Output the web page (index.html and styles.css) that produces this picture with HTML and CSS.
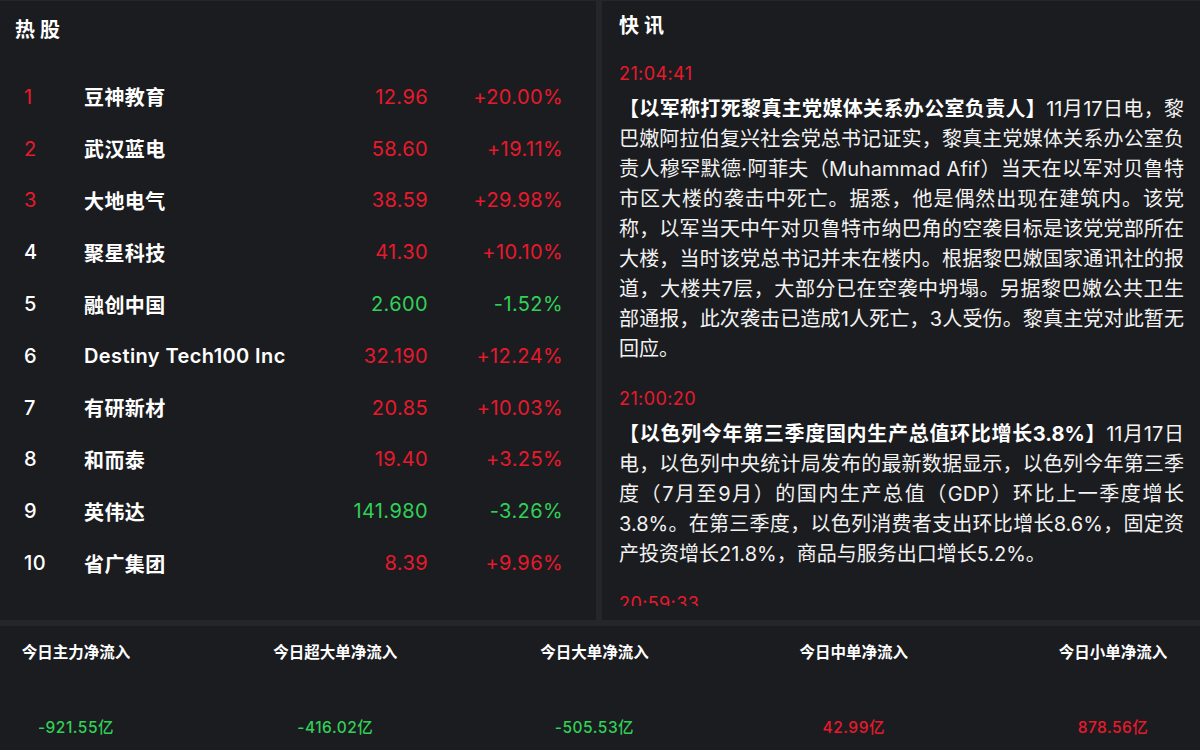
FILE: index.html
```html
<!DOCTYPE html>
<html lang="zh-CN">
<head>
<meta charset="utf-8">
<title>热股 快讯</title>
<link rel="stylesheet" href="styles.css">
</head>
<body>
<div class="page">
  <div class="top">
    <section class="panel hot">
      <h2 class="title">热股</h2>
      <div class="list">
        <div class="row"><span class="rank up">1</span><span class="name">豆神教育</span><span class="price up">12.96</span><span class="pct up">+20.00%</span></div>
        <div class="row"><span class="rank up">2</span><span class="name">武汉蓝电</span><span class="price up">58.60</span><span class="pct up">+19.11%</span></div>
        <div class="row"><span class="rank up">3</span><span class="name">大地电气</span><span class="price up">38.59</span><span class="pct up">+29.98%</span></div>
        <div class="row"><span class="rank">4</span><span class="name">聚星科技</span><span class="price up">41.30</span><span class="pct up">+10.10%</span></div>
        <div class="row"><span class="rank">5</span><span class="name">融创中国</span><span class="price down">2.600</span><span class="pct down">-1.52%</span></div>
        <div class="row"><span class="rank">6</span><span class="name">Destiny Tech100 Inc</span><span class="price up">32.190</span><span class="pct up">+12.24%</span></div>
        <div class="row"><span class="rank">7</span><span class="name">有研新材</span><span class="price up">20.85</span><span class="pct up">+10.03%</span></div>
        <div class="row"><span class="rank">8</span><span class="name">和而泰</span><span class="price up">19.40</span><span class="pct up">+3.25%</span></div>
        <div class="row"><span class="rank">9</span><span class="name">英伟达</span><span class="price down">141.980</span><span class="pct down">-3.26%</span></div>
        <div class="row"><span class="rank">10</span><span class="name">省广集团</span><span class="price up">8.39</span><span class="pct up">+9.96%</span></div>
      </div>
    </section>
    <section class="panel news">
      <h2 class="title">快讯</h2>
      <div class="feed">
        <article class="item">
          <div class="time">21:04:41</div>
          <p class="text"><b>【以军称打死黎真主党媒体关系办公室负责人】</b>11月17日电，黎巴嫩阿拉伯复兴社会党总书记证实，黎真主党媒体关系办公室负责人穆罕默德·阿菲夫（Muhammad Afif）当天在以军对贝鲁特市区大楼的袭击中死亡。据悉，他是偶然出现在建筑内。该党称，以军当天中午对贝鲁特市纳巴角的空袭目标是该党党部所在大楼，当时该党总书记并未在楼内。根据黎巴嫩国家通讯社的报道，大楼共7层，大部分已在空袭中坍塌。另据黎巴嫩公共卫生部通报，此次袭击已造成1人死亡，3人受伤。黎真主党对此暂无回应。</p>
        </article>
        <article class="item">
          <div class="time">21:00:20</div>
          <p class="text"><b>【以色列今年第三季度国内生产总值环比增长3.8%】</b>11月17日电，以色列中央统计局发布的最新数据显示，以色列今年第三季度（7月至9月）的国内生产总值（GDP）环比上一季度增长3.8%。在第三季度，以色列消费者支出环比增长8.6%，固定资产投资增长21.8%，商品与服务出口增长5.2%。</p>
        </article>
        <article class="item">
          <div class="time">20:59:33</div>
        </article>
      </div>
    </section>
  </div>
  <div class="flows">
    <div class="flow"><div class="label">今日主力净流入</div><div class="value down">-921.55亿</div></div>
    <div class="flow"><div class="label">今日超大单净流入</div><div class="value down">-416.02亿</div></div>
    <div class="flow"><div class="label">今日大单净流入</div><div class="value down">-505.53亿</div></div>
    <div class="flow"><div class="label">今日中单净流入</div><div class="value up">42.99亿</div></div>
    <div class="flow"><div class="label">今日小单净流入</div><div class="value up">878.56亿</div></div>
  </div>
</div>
</body>
</html>
```

FILE: styles.css
```css
* { box-sizing: border-box; margin: 0; padding: 0; }
html, body {
  width: 1200px;
  height: 750px;
  overflow: hidden;
  background: #25262c;
  font-family: Inter, "Noto Sans CJK SC", sans-serif;
  color: #ffffff;
}
.page {
  width: 1200px;
  height: 750px;
  display: flex;
  flex-direction: column;
  gap: 6px;
}
.top {
  height: 620px;
  display: flex;
  gap: 6px;
  padding-top: 1px;
}
.panel {
  background: #1b1c1f;
  overflow: hidden;
}
.hot {
  width: 596px;
  padding: 16px 33px 0 0;
}
.news {
  flex: 1;
  padding: 12px 16px 0 17px;
  display: flex;
  flex-direction: column;
}
.title {
  font-size: 20px;
  font-weight: 700;
  letter-spacing: 5px;
  line-height: 26px;
}
.hot .title { padding-left: 15px; }
.list { margin-top: 28px; }
.row {
  height: 51.8px;
  display: grid;
  grid-template-columns: 60px 1fr 110px 135px;
  align-items: center;
  padding-left: 24px;
  font-size: 20px;
  letter-spacing: 0.4px;
}
.rank { font-weight: 500; }
.name { font-weight: 600; }
.price, .pct { text-align: right; font-weight: 400; }
.up { color: #e8192c; }
.down { color: #30d158; }
.rank.up { font-weight: 400; }
.feed {
  flex: 1;
  margin-top: 23px;
  margin-bottom: 14px;
  overflow: hidden;
}
.item { margin-bottom: 23px; }
.time {
  color: #e8192c;
  font-size: 18px;
  line-height: 24px;
  letter-spacing: 0.4px;
}
.text {
  margin-top: 8px;
  font-size: 20px;
  line-height: 30px;
  color: #f2f2f2;
  text-align: justify;
}
.text b { font-weight: 700; color: #fff; }
.flows {
  flex: 1;
  background: #1b1c1f;
  display: flex;
  justify-content: space-between;
  padding: 15px 12px 0 1px;
}
.flow {
  width: 150px;
  text-align: center;
  display: flex;
  flex-direction: column;
}
.label {
  font-size: 15.5px;
  font-weight: 700;
  line-height: 24px;
}
.value {
  margin-top: 51px;
  font-size: 15.5px;
  font-weight: 500;
  line-height: 24px;
  letter-spacing: 0.5px;
}
```
